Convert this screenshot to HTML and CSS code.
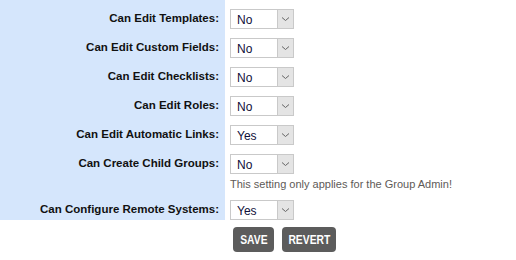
FILE: index.html
```html
<!DOCTYPE html>
<html>
<head>
<meta charset="utf-8">
<link rel="stylesheet" href="styles.css">
</head>
<body>
<div class="form">
  <div class="label">Can Edit Templates:</div>
  <div class="field"><div class="select"><span class="value">No</span><span class="arrow"><svg width="9" height="6" viewBox="0 0 9 6"><path d="M1 1.5 L4.5 4.5 L8 1.5" fill="none" stroke="#666" stroke-width="1"/></svg></span></div></div>

  <div class="label">Can Edit Custom Fields:</div>
  <div class="field"><div class="select"><span class="value">No</span><span class="arrow"><svg width="9" height="6" viewBox="0 0 9 6"><path d="M1 1.5 L4.5 4.5 L8 1.5" fill="none" stroke="#666" stroke-width="1"/></svg></span></div></div>

  <div class="label">Can Edit Checklists:</div>
  <div class="field"><div class="select"><span class="value">No</span><span class="arrow"><svg width="9" height="6" viewBox="0 0 9 6"><path d="M1 1.5 L4.5 4.5 L8 1.5" fill="none" stroke="#666" stroke-width="1"/></svg></span></div></div>

  <div class="label">Can Edit Roles:</div>
  <div class="field"><div class="select"><span class="value">No</span><span class="arrow"><svg width="9" height="6" viewBox="0 0 9 6"><path d="M1 1.5 L4.5 4.5 L8 1.5" fill="none" stroke="#666" stroke-width="1"/></svg></span></div></div>

  <div class="label">Can Edit Automatic Links:</div>
  <div class="field"><div class="select"><span class="value">Yes</span><span class="arrow"><svg width="9" height="6" viewBox="0 0 9 6"><path d="M1 1.5 L4.5 4.5 L8 1.5" fill="none" stroke="#666" stroke-width="1"/></svg></span></div></div>

  <div class="label">Can Create Child Groups:</div>
  <div class="field"><div class="select"><span class="value">No</span><span class="arrow"><svg width="9" height="6" viewBox="0 0 9 6"><path d="M1 1.5 L4.5 4.5 L8 1.5" fill="none" stroke="#666" stroke-width="1"/></svg></span></div>
    <div class="note">This setting only applies for the Group Admin!</div>
  </div>

  <div class="label">Can Configure Remote Systems:</div>
  <div class="field"><div class="select"><span class="value">Yes</span><span class="arrow"><svg width="9" height="6" viewBox="0 0 9 6"><path d="M1 1.5 L4.5 4.5 L8 1.5" fill="none" stroke="#666" stroke-width="1"/></svg></span></div></div>

  <div class="spacer"></div>
  <div class="actions">
    <button class="btn btn-save"><span>SAVE</span></button>
    <button class="btn btn-revert"><span>REVERT</span></button>
  </div>
</div>
</body>
</html>
```

FILE: styles.css
```css
html, body {
  margin: 0;
  padding: 0;
  background: #fff;
}
body {
  font-family: "Liberation Sans", Arial, sans-serif;
}
.form {
  display: grid;
  grid-template-columns: 225px 1fr;
  column-gap: 5px;
}
.label {
  background: #d5e6fc;
  padding: 9px 6px 0 0;
  text-align: right;
  font-weight: bold;
  font-size: 11.5px;
  line-height: 18px;
  color: #111;
}
.field {
  padding-top: 9px;
}
.select {
  box-sizing: border-box;
  width: 64px;
  height: 20px;
  border: 1px solid #c9c9c9;
  background: #fff;
  display: flex;
  align-items: stretch;
}
.value {
  flex: 1;
  font-size: 12px;
  line-height: 18px;
  padding: 1px 0 0 6px;
  color: #10103a;
}
.arrow {
  width: 16px;
  box-sizing: border-box;
  border-left: 1px solid #c9c9c9;
  background: #e4e4e4;
  display: flex;
  align-items: center;
  justify-content: center;
}
.note {
  font-size: 11px;
  line-height: 14px;
  margin-top: 3px;
  color: #5e5a57;
}
.spacer {
  height: 0;
}
.actions {
  display: flex;
  gap: 8px;
  padding: 7px 0 0 3px;
}
.btn {
  height: 25px;
  border: none;
  border-radius: 4px;
  background: #5c5c5c;
  color: #fff;
  font-family: "Liberation Sans", Arial, sans-serif;
  font-weight: bold;
  font-size: 12px;
  padding: 0;
  display: flex;
  align-items: center;
  justify-content: center;
}
.btn span {
  display: inline-block;
  transform: scaleX(0.86);
}
.btn-save {
  width: 41px;
}
.btn-revert {
  width: 54px;
}
```
